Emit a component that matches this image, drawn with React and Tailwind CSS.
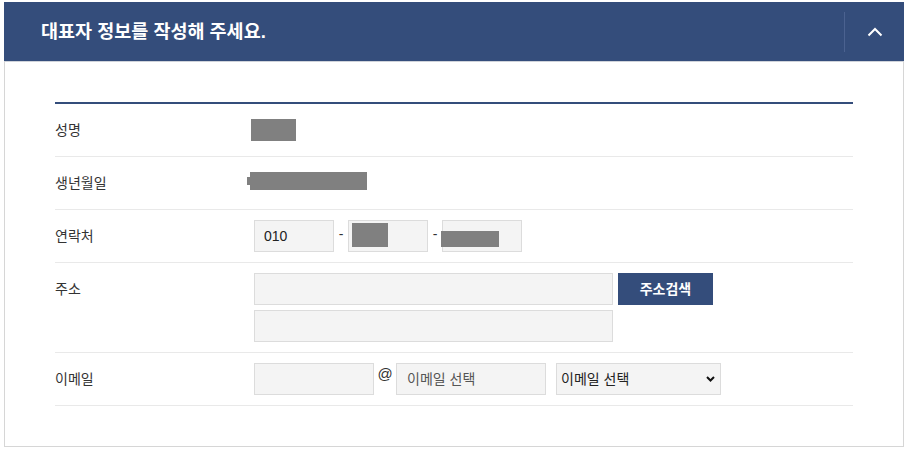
import React from "react";

const inputCls =
  "h-8 border border-[#dcdcdc] bg-[#f4f4f4] px-[9px] text-sm text-[#222] outline-none";

function Row({ label, children }) {
  return (
    <div className="flex items-start border-b border-[#e9e9e9] py-[10px]">
      <div className="h-8 w-[199px] shrink-0 text-sm leading-8 text-[#333]">{label}</div>
      <div className="flex min-h-8 flex-1 flex-col gap-[5px]">{children}</div>
    </div>
  );
}

export default function App() {
  return (
    <div className="font-['Liberation_Sans','Noto_Sans_CJK_KR',sans-serif] bg-white w-[908px] h-[450px]">
      <div className="ml-[4px] pt-[2px] w-[900px]">
        <div className="flex h-[59px] items-center bg-[#344d7b]">
          <h2 className="flex-1 pl-[37px] text-[18.5px] font-bold text-white">
            대표자 정보를 작성해 주세요.
          </h2>
          <div className="h-10 w-px bg-[#4b6290]" />
          <button className="flex h-[59px] w-[59px] items-center justify-center">
            <svg width="16" height="10" viewBox="0 0 16 10">
              <polyline points="1.5,8.5 8,2 14.5,8.5" fill="none" stroke="white" strokeWidth="2" />
            </svg>
          </button>
        </div>
        <div className="border border-t-[#cfd3da] border-[#d6d6d6] px-[50px] pt-[40px] pb-[40px]">
          <div className="h-[2px] bg-[#344d7b]" />
          <Row label="성명">
            <div className="flex h-8 items-center">
              <div className="-ml-[3px] h-[22px] w-[45px] bg-[#808080]" />
            </div>
          </Row>
          <Row label="생년월일">
            <div className="flex h-8 items-center">
              <div className="-ml-[7px] mt-[-4px] h-[8px] w-[3px] self-center bg-[#808080]" />
              <div className="-mt-[4px] h-[18px] w-[117px] bg-[#808080]" />
            </div>
          </Row>
          <Row label="연락처">
            <div className="flex items-center">
              <input className={`${inputCls} w-20`} defaultValue="010" />
              <span className="w-[14px] -mt-[4px] text-center text-sm text-[#333]">-</span>
              <div className={`${inputCls} relative w-20`}>
                <div className="absolute left-[3px] top-[2px] h-6 w-9 bg-[#808080]" />
              </div>
              <span className="w-[14px] -mt-[4px] text-center text-sm text-[#333]">-</span>
              <div className={`${inputCls} relative w-20`}>
                <div className="absolute left-[-2px] top-[10px] h-4 w-[58px] bg-[#808080]" />
              </div>
            </div>
          </Row>
          <Row label="주소">
            <div className="flex gap-[5px]">
              <input className={`${inputCls} w-[359px]`} />
              <button className="h-8 w-[95px] bg-[#344d7b] text-sm font-bold text-white">
                주소검색
              </button>
            </div>
            <input className={`${inputCls} w-[359px]`} />
          </Row>
          <Row label="이메일">
            <div className="flex items-center">
              <input className={`${inputCls} w-[120px]`} />
              <span className="w-[22px] -mt-[9px] text-center text-[15px] text-[#333]">@</span>
              <input
                className={`${inputCls} w-[150px] pl-[10px] placeholder:text-[#555]`}
                placeholder="이메일 선택"
              />
              <div className="relative ml-[10px]">
                <select className="h-8 w-[165px] appearance-none border border-[#dcdcdc] bg-[#f4f4f4] pl-[4px] text-sm text-[#222] outline-none">
                  <option>이메일 선택</option>
                </select>
                <svg
                  className="pointer-events-none absolute right-[6px] top-[13px]"
                  width="9"
                  height="6"
                  viewBox="0 0 9 6"
                >
                  <polyline points="1,1 4.5,4.5 8,1" fill="none" stroke="#111" strokeWidth="2" />
                </svg>
              </div>
            </div>
          </Row>
        </div>
      </div>
    </div>
  );
}
